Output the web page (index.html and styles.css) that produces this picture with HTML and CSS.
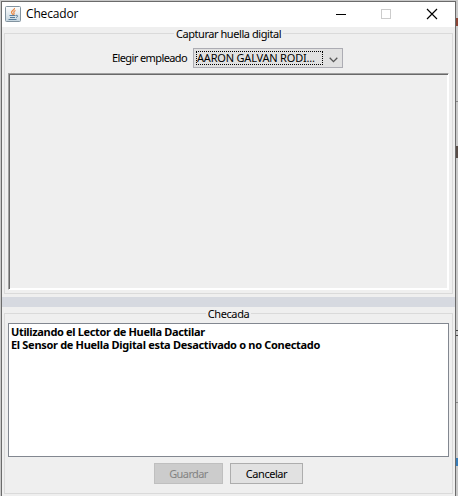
FILE: index.html
```
<!DOCTYPE html>
<html lang="es">
<head>
<meta charset="utf-8">
<title>Checador</title>
<link rel="stylesheet" href="styles.css">
</head>
<body>
<div class="desktop">
<div class="window">
  <header class="titlebar">
    <svg class="java" width="16" height="16" viewBox="0 0 16 16">
      <defs><linearGradient id="g" x2="0" y2="1"><stop stop-color="#fff"/><stop offset="1" stop-color="#c5d5df"/></linearGradient></defs>
      <rect x=".5" y=".5" width="15" height="15" rx="1" fill="url(#g)" stroke="#8394a0"/>
      <path d="M9.500 2C10 4 6 4.500 6.500 6.500C6.700 7.500 8 8 7.500 8.800M10.500 4.500C8.500 5.500 8.500 6 9 7C9.300 7.700 9 8.200 8.500 8.800" fill="none" stroke="#e8823a" stroke-width="1.200"/>
      <path d="M4.500 9.500H10.500M5 11.500H10M3.500 13.500H11.500M11 9.300C13.500 9 13 11 11 11.500" fill="none" stroke="#587d9b"/>
    </svg>
    <span class="title">Checador</span>
    <svg class="controls" width="106" height="14" viewBox="0 0 106 14" fill="none" shape-rendering="crispEdges">
      <path d="M0 7.500H10" stroke="#000"/>
      <rect x="45.500" y="2.500" width="9" height="9" stroke="#ccc"/>
      <path d="M91 2L101 12M101 2L91 12" stroke="#000" stroke-width="1.150" shape-rendering="auto"/>
    </svg>
  </header>
  <section class="group capture">
    <h2 class="legend"><span class="t-capture">Capturar huella digital</span></h2>
    <div class="row">
      <span class="label">Elegir empleado</span>
      <div class="combo">
        <span class="value"><span class="name">AARON GALVAN RODI...</span></span>
        <svg width="9" height="6" viewBox="0 0 9 6"><path d="M.7 .8L4.500 4.600L8.300 .8" fill="none" stroke="#555" stroke-width="1.300"/></svg>
      </div>
    </div>
    <div class="preview"></div>
  </section>
  <div class="divider"></div>
  <section class="group check">
    <h2 class="legend"><span class="t-check">Checada</span></h2>
    <div class="log">
      <p class="l1">Utilizando el Lector de Huella Dactilar</p>
      <p class="l2">El Sensor de Huella Digital esta Desactivado o no Conectado</p>
    </div>
    <div class="buttons">
      <button class="save" disabled>Guardar</button>
      <button class="cancel">Cancelar</button>
    </div>
  </section>
</div>
<div class="behind"><i class="b1"></i><i class="b2"></i><i class="b3"></i><i class="b4"></i><i class="b5"></i><i class="b6"></i></div>
</div>
</body>
</html>
```
FILE: styles.css
```
* { box-sizing: border-box; }
body { margin: 0; overflow: hidden; font: 11px "Noto Sans", sans-serif; color: #000; }
.desktop { display: flex; width: 458px; height: 496px; padding: 1px 0 0 1px; background: #c9c9c9; }
.window { width: 455px; height: 495px; flex: none; border: 1px solid #6b6b6b; border-bottom: 0; background: #efefef; }
.titlebar { display: flex; align-items: center; height: 25px; padding-left: 3px; background: #fff; }
.java { margin-top: -1px; }
.title { margin-left: 5px; font: 12px/16px "Open Sans", sans-serif; letter-spacing: -.15px; margin-top: -1px; }
.controls { margin-left: auto; margin-right: 13px; margin-top: -1px; }
.group { width: 449px; margin-left: 2px; border: 1px solid #dadada; }
.capture { height: 261px; margin-top: 6px; }
.check { height: 181px; margin-top: 6px; }
.legend { display: flex; justify-content: center; height: 14px; margin: -7px 0 0; font-size: 11px; font-weight: normal; line-height: 14px; }
.legend span { padding: 0 2px; background: #efefef; white-space: nowrap; }
.t-capture { letter-spacing: -.44px; }
.t-check { letter-spacing: -.38px; }
.row { display: flex; align-items: center; gap: 6px; height: 20px; margin: 7px 0 0 107px; }
.label { width: 75px; letter-spacing: -.6px; white-space: nowrap; line-height: 15px; margin-top: -1px; }
.combo { display: flex; align-items: center; width: 150px; height: 20px; padding: 0 4px 0 2px; border: 1px solid #acacb3; background: #e1e1e1; justify-content: space-between; }
.combo svg { margin-top: 3px; }
.value { width: 127px; height: 14px; border: 1px dotted #000; line-height: 12px; white-space: nowrap; letter-spacing: -.2px; }
.preview { height: 217px; width: 441px; margin: 5px 0 0 3px; border: 1px solid; border-color: #a0a0a0 #fff #fff #a0a0a0; box-shadow: inset 1px 1px #696969, inset -1px -1px #fff; }
.divider { height: 10px; margin-top: 3px; background: #d6d9e0; }
.log { width: 441px; height: 134px; margin: 2px 0 0 3px; padding: 1px 2px; border: 1px solid #828790; background: #fff; }
.log p { margin: 0; font: bold 11px/13px "Noto Sans", sans-serif; white-space: nowrap; }
.log .l1 { letter-spacing: -.34px; }
.log .l2 { letter-spacing: -.31px; }
.buttons { display: flex; gap: 7px; margin: 6px 0 0 149px; }
button { height: 21px; padding: 0 0 1px; border: 1px solid #adadad; background: #e1e1e1; color: #000; font: 11px/17px "Noto Sans", sans-serif; }
.save { width: 69px; border-color: #bfbfbf; background: #ccc; color: #838383; letter-spacing: -.6px; }
.cancel { width: 73px; letter-spacing: -.45px; }
.behind { display: flex; flex-direction: column; width: 2px; }
.behind i { flex: none; height: 2px; background: #888; }
.behind .b1 { margin-top: 17px; height: 8px; background: #8c4435; }
.behind .b2 { margin-top: 75px; height: 1px; }
.behind .b3 { margin-top: 44px; height: 12px; background: #594d48; }
.behind .b4 { margin-top: 172px; height: 6px; background: transparent; border: solid #444; border-width: 1px 0; }
.behind .b5 { margin-top: 66px; height: 1px; }
.behind .b6 { margin-top: 55px; height: 8px; background: #397db8; }
```
